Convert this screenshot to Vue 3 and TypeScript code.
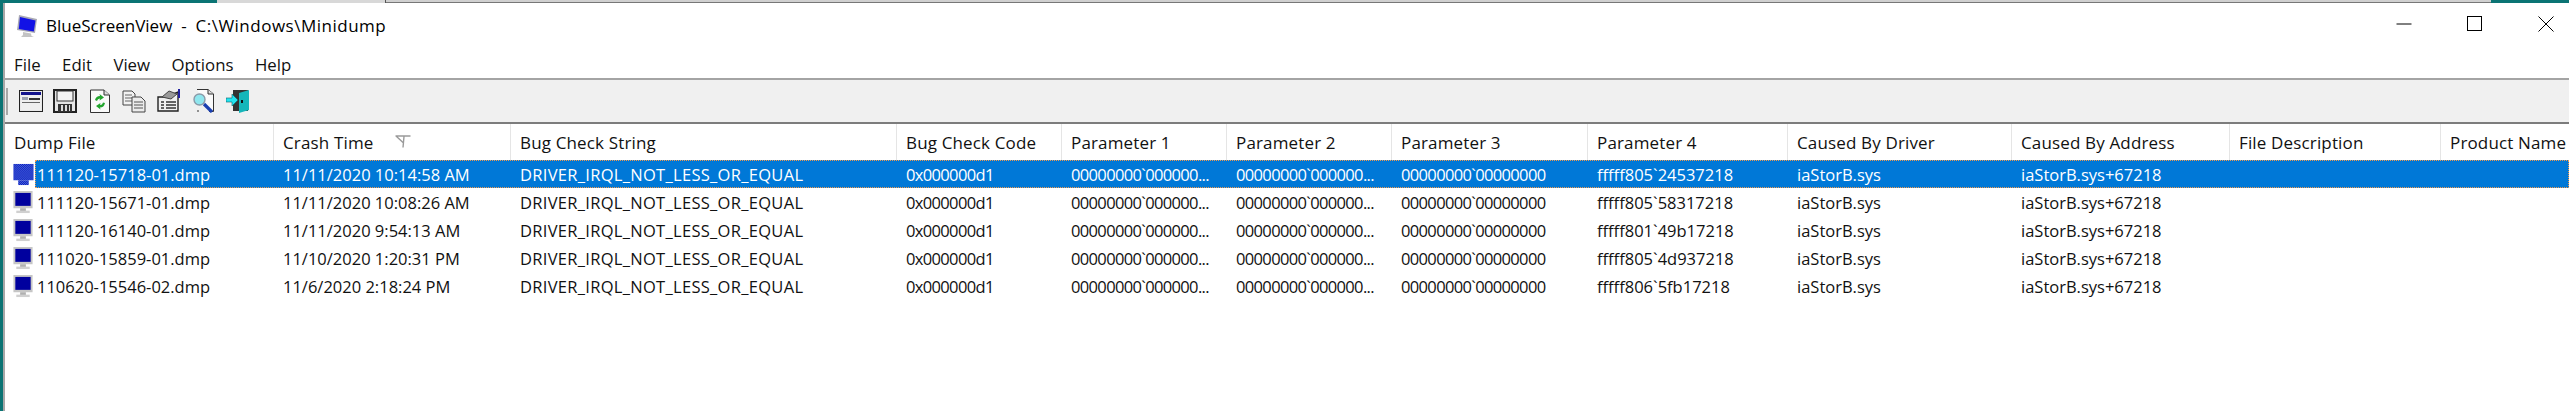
<script setup lang="ts">
const menus: string[] = ['File', 'Edit', 'View', 'Options', 'Help']
const headers: string[] = ['Dump File', 'Crash Time', 'Bug Check String', 'Bug Check Code', 'Parameter 1', 'Parameter 2', 'Parameter 3', 'Parameter 4', 'Caused By Driver', 'Caused By Address', 'File Description', 'Product Name']
const trunc = '00000000`000000...'
const rows: { file: string; time: string; p4: string }[] = [
  { file: '111120-15718-01.dmp', time: '11/11/2020 10:14:58 AM', p4: 'fffff805`24537218' },
  { file: '111120-15671-01.dmp', time: '11/11/2020 10:08:26 AM', p4: 'fffff805`58317218' },
  { file: '111120-16140-01.dmp', time: '11/11/2020 9:54:13 AM', p4: 'fffff801`49b17218' },
  { file: '111020-15859-01.dmp', time: '11/10/2020 1:20:31 PM', p4: 'fffff805`4d937218' },
  { file: '110620-15546-02.dmp', time: '11/6/2020 2:18:24 PM', p4: 'fffff806`5fb17218' },
]
</script>

<template>
  <div class="desktop">
    <div class="top-strip">
      <span class="strip-teal"></span>
      <span class="strip-a"></span>
      <span class="strip-b"></span>
      <span class="strip-teal end"></span>
    </div>
    <div class="window">
      <div class="titlebar">
        <svg class="app-icon" width="22" height="24" viewBox="0 0 22 24">
          <path d="M3 1 L21 5 L19 19 L1 16 Z" fill="#a9a9b4" />
          <path d="M4 3 L19.5 6.5 L17.8 17.5 L2.8 15 Z" fill="#1212e6" />
          <path d="M7 18 L15 19.5 L15.5 22 L18 23 L5 23 L7 21 Z" fill="#c4c4c4" />
        </svg>
        <span class="title">BlueScreenView&nbsp; -&nbsp; <span class="path">C:\Windows\Minidump</span></span>
        <div class="controls">
          <svg width="16" height="16" viewBox="0 0 16 16"><path d="M0.5 8 H15.5" stroke="#000" fill="none" /></svg>
          <svg width="16" height="16" viewBox="0 0 16 16"><rect x="0.5" y="0.5" width="14" height="14" stroke="#000" fill="none" /></svg>
          <svg width="16" height="16" viewBox="0 0 16 16"><path d="M0.5 0.5 L15.5 15.5 M15.5 0.5 L0.5 15.5" stroke="#000" fill="none" /></svg>
        </div>
      </div>
      <div class="menubar">
        <span v-for="m in menus" :key="m" class="menu">{{ m }}</span>
      </div>
      <div class="toolbar">
        <span class="grip"></span>
        <!-- Properties window -->
        <svg class="tool" width="24" height="24" viewBox="0 0 24 24">
          <rect x="0.5" y="1.5" width="23" height="21" fill="#e8e8e8" stroke="#222" />
          <rect x="2" y="3" width="20" height="3" fill="#14148c" />
          <rect x="2" y="6" width="20" height="15" fill="#efefef" />
          <rect x="3" y="8" width="6" height="3" fill="#9aa0b0" />
          <rect x="10" y="9" width="11" height="2" fill="#333" />
          <rect x="3" y="13" width="18" height="1" fill="#666" />
        </svg>
        <!-- Save -->
        <svg class="tool" width="24" height="24" viewBox="0 0 24 24">
          <path d="M1 1 H23 V23 H1 Z" fill="#e4e4e4" stroke="#222" stroke-width="2" />
          <rect x="4" y="2" width="16" height="10" fill="#f4f4f4" stroke="#333" />
          <rect x="5" y="15" width="14" height="8" fill="#333" />
          <rect x="8" y="16" width="2" height="6" fill="#ddd" />
          <rect x="12" y="16" width="2" height="6" fill="#ddd" />
          <rect x="16" y="16" width="1" height="6" fill="#ddd" />
        </svg>
        <!-- Refresh -->
        <svg class="tool" width="24" height="24" viewBox="0 0 24 24">
          <path d="M2.5 1 H16 L21.5 6 V23.5 H2.5 Z" fill="#fafafa" stroke="#333" />
          <path d="M16 1 V6 H21.5" fill="#ddd" stroke="#333" />
          <path d="M7 11 Q8 7 12 7 L11.5 5 L16 8.5 L11.5 11.5 L12 9.5 Q9.5 9.5 9 12 Z" fill="#22a52e" />
          <path d="M17 14 Q16 18.5 12 18.5 L12.5 20.5 L8 17 L12.5 14 L12 16 Q14.5 16 15 13.5 Z" fill="#22a52e" />
        </svg>
        <!-- Copy -->
        <svg class="tool" width="24" height="24" viewBox="0 0 24 24">
          <path d="M1 2 H10 L13 5 V16 H1 Z" fill="#f2f2f2" stroke="#444" />
          <path d="M3 6 H10 M3 9 H10 M3 12 H10" stroke="#666" />
          <path d="M10 8 H19 L23 12 V23 H10 Z" fill="#ececec" stroke="#444" />
          <path d="M12 13 H21 M12 16 H21 M12 19 H21" stroke="#555" />
        </svg>
        <!-- Options -->
        <svg class="tool" width="24" height="24" viewBox="0 0 24 24">
          <path d="M2 8 L9 8 L21 3 V22 H1 V8 Z" fill="#f0f0f0" stroke="#222" stroke-width="1.4" />
          <path d="M5 8 L12 2 L20 5 L14 10 Z" fill="#999" stroke="#444" />
          <rect x="21" y="0" width="2" height="9" fill="#2222a0" />
          <path d="M4 13 H7 M9 13 H19 M4 16 H7 M9 16 H19 M4 19 H7 M9 19 H19" stroke="#333" stroke-width="1.3" />
        </svg>
        <!-- Find -->
        <svg class="tool" width="24" height="24" viewBox="0 0 24 24">
          <path d="M5 0.5 H16 L21.5 5 V22.5 H17 M7 22 H5" fill="#fafafa" stroke="#333" />
          <path d="M16 0.5 V5 H21.5" fill="#ddd" stroke="#333" />
          <path d="M12 15 L20 23" stroke="#1a3fb0" stroke-width="3.2" />
          <circle cx="7.5" cy="10.5" r="5.5" fill="#8fe6ee" stroke="#8a9aa8" stroke-width="1.4" />
        </svg>
        <!-- Exit -->
        <svg class="tool" width="24" height="24" viewBox="0 0 24 24">
          <rect x="7" y="1" width="15" height="21" fill="#333" />
          <path d="M13 4 L23 1 V21 L13 24 Z" fill="#15b6ba" />
          <rect x="15" y="11" width="2" height="3" fill="#111" />
          <path d="M0 9 H6 V5 L12 11 L6 17 V13 H0 Z" fill="#24e4f0" stroke="#0b5f66" stroke-width="0.6" />
        </svg>
      </div>
      <div class="list">
        <div class="head">
          <div v-for="(h, i) in headers" :key="h" class="hcell">
            {{ h }}
            <svg v-if="i === 1" class="sort" width="16" height="13" viewBox="0 0 16 13">
              <path d="M0.5 1 H15.5 M1 1 L8 7.5 M9 1.5 L8 12.5" stroke="#9a9a9a" stroke-width="1.4" fill="none" />
            </svg>
          </div>
        </div>
        <div v-for="(r, i) in rows" :key="r.file" class="row" :class="{ selected: i === 0 }">
          <div class="icon-cell">
            <svg class="row-icon" width="22" height="23" viewBox="0 0 22 24">
              <defs>
                <pattern id="dither" width="2" height="2" patternUnits="userSpaceOnUse">
                  <rect width="2" height="2" fill="#0a0ab8" />
                  <rect width="1" height="1" fill="#4a78e0" />
                  <rect x="1" y="1" width="1" height="1" fill="#4a78e0" />
                </pattern>
              </defs>
              <template v-if="i === 0">
                <rect x="1" y="1" width="21" height="17" fill="url(#dither)" />
                <rect x="6" y="18" width="11" height="5" fill="url(#dither)" />
              </template>
              <template v-else>
                <rect x="1" y="0" width="20" height="18" fill="#c6c6c6" />
                <rect x="3" y="2" width="16" height="13.5" fill="#00009e" />
                <rect x="8" y="18" width="6" height="3" fill="#b0b0b0" />
                <rect x="4" y="20.5" width="14" height="2.5" fill="#d0d0d0" />
              </template>
            </svg>
          </div>
          <div class="cells">
            <div class="cell first">{{ r.file }}</div>
            <div class="cell">{{ r.time }}</div>
            <div class="cell caps">DRIVER_IRQL_NOT_LESS_OR_EQUAL</div>
            <div class="cell hex">0x000000d1</div>
            <div class="cell hex">{{ trunc }}</div>
            <div class="cell hex">{{ trunc }}</div>
            <div class="cell hex">00000000`00000000</div>
            <div class="cell">{{ r.p4 }}</div>
            <div class="cell">iaStorB.sys</div>
            <div class="cell">iaStorB.sys+67218</div>
            <div class="cell"></div>
            <div class="cell"></div>
          </div>
        </div>
      </div>
    </div>
  </div>
</template>

<style>
html, body { margin: 0; overflow: hidden; background: #fff; }
</style>

<style scoped>
.desktop {
  width: 2569px;
  height: 411px;
  display: flex;
  flex-direction: column;
  background: #0b7474;
  font-family: "Open Sans", "Noto Sans", sans-serif;
  font-size: 16.5px;
  color: #111;
  overflow: hidden;
}
.top-strip { height: 3px; display: flex; flex: none; }
.strip-teal { width: 217px; background: #0b7474; }
.strip-teal.end { width: 78px; }
.strip-a { width: 168px; background: #d8d8d8; border-right: 1px solid #555; }
.strip-b { flex: 1; background: #d0d0d0; border-bottom: 1px solid #777; }
.window {
  flex: 1;
  margin-left: 3px;
  border-left: 2px solid #a8a8a8;
  background: #fff;
  display: flex;
  flex-direction: column;
  min-height: 0;
}
.titlebar { height: 45px; display: flex; align-items: center; padding-left: 11px; flex: none; }
.app-icon { margin-right: 8px; filter: blur(0.4px); }
.title { font-size: 17px; color: #000; }
.path { letter-spacing: 0.5px; }
.controls { margin-left: auto; display: flex; gap: 55px; padding-right: 15px; margin-top: -4px; }
.menubar { height: 30px; display: flex; gap: 21.5px; padding-left: 9px; padding-top: 2px; box-sizing: border-box; align-items: center; flex: none; font-size: 16.8px; }
.toolbar {
  height: 42px;
  flex: none;
  background: #f0f0f0;
  border-top: 2px solid #a4a4a4;
  border-bottom: 2px solid #7c7c7c;
  display: flex;
  align-items: center;
  gap: 10.6px;
  box-sizing: content-box;
}
.grip { width: 2px; height: 27px; background: #a8a8a8; margin-left: 1px; }
.tool { flex: none; filter: blur(0.4px); }
.list { flex: 1; background: #fff; }
.head, .cells {
  display: grid;
  grid-template-columns: 239px 237px 386px 165px 165px 165px 196px 200px 224px 218px 211px 1fr;
}
.head { grid-template-columns: 269px 237px 386px 165px 165px 165px 196px 200px 224px 218px 211px 1fr; height: 36px; font-size: 17px; letter-spacing: 0.15px; }
.hcell {
  display: flex;
  align-items: center;
  padding-left: 9px;
  border-right: 1px solid #e5e5e5;
  box-sizing: border-box;
  white-space: nowrap;
  overflow: hidden;
}
.hcell:last-child { border-right: none; }
.sort { margin-left: 22px; margin-top: -2px; }
.row { height: 28px; display: flex; }
.icon-cell { width: 30px; flex: none; display: flex; align-items: center; padding-left: 7px; box-sizing: border-box; }
.row-icon { filter: blur(0.3px); }
.cells { flex: 1; min-width: 0; align-items: center; }
.cell { padding-left: 9px; white-space: nowrap; overflow: hidden; }
.cell.hex { letter-spacing: -0.65px; }
.cell.caps { letter-spacing: 0.3px; }
.cell.first { padding-left: 2px; }
.selected .cells {
  background: #0078d7;
  color: #fff;
  outline: 1px dotted #f09a50;
  outline-offset: -1px;
}
</style>
